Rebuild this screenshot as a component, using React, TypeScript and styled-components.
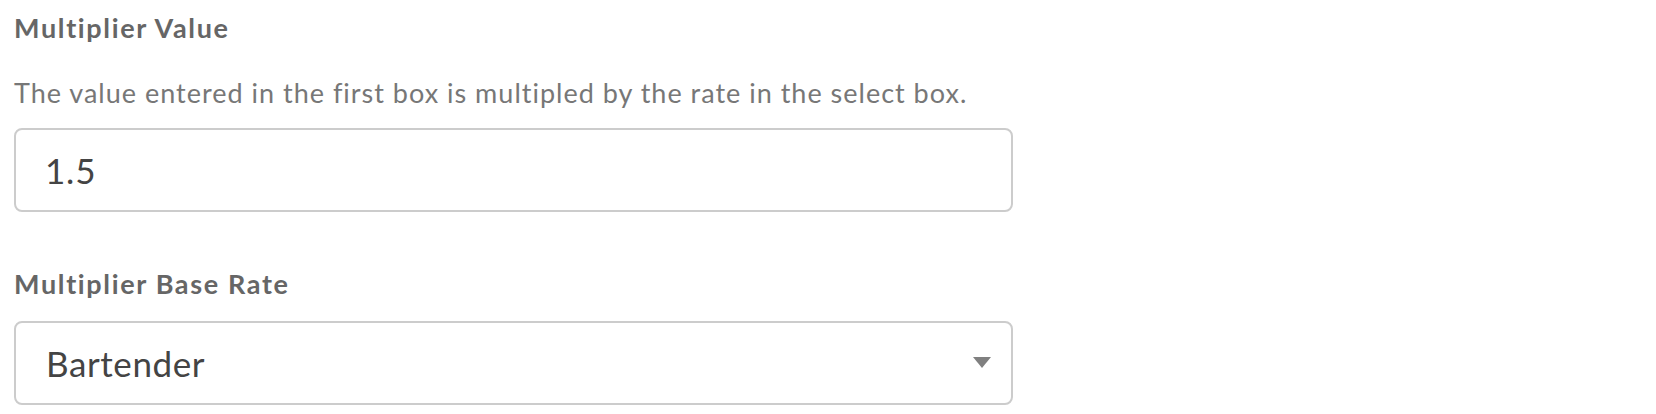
import React from 'react';
import styled, { createGlobalStyle } from 'styled-components';

const GlobalStyle = createGlobalStyle`
  html, body {
    margin: 0;
    padding: 0;
    background: #ffffff;
    font-family: Lato, "Open Sans", "Liberation Sans", sans-serif;
  }
`;

const Form = styled.div`
  width: 999px;
  padding: 12px 0 0 14px;
`;

const Label = styled.div<{ $gap?: number }>`
  margin-top: ${props => props.$gap || 0}px;
  font-size: 27px;
  line-height: 31px;
  font-weight: 700;
  letter-spacing: 1.65px;
  color: #666666;
`;

const Help = styled.div`
  margin-top: 34px;
  font-size: 27px;
  line-height: 32px;
  letter-spacing: 1px;
  color: #777777;
`;

const TextInput = styled.input`
  display: block;
  box-sizing: border-box;
  width: 100%;
  height: 84px;
  margin-top: 19px;
  padding: 0 29px;
  border: 2px solid #cccccc;
  border-radius: 8px;
  background: #ffffff;
  font-family: inherit;
  font-size: 35px;
  letter-spacing: 0.8px;
  color: #444444;
  outline: none;
`;

const SelectBox = styled.div`
  display: flex;
  align-items: center;
  justify-content: space-between;
  box-sizing: border-box;
  width: 100%;
  height: 84px;
  margin-top: 22px;
  padding: 0 20px 0 30px;
  border: 2px solid #cccccc;
  border-radius: 8px;
  background: #ffffff;
  font-size: 35px;
  letter-spacing: 0.6px;
  color: #444444;
`;

const Caret = styled.svg`
  width: 18px;
  height: 12px;
  fill: #808080;
`;

export default function App() {
  return (
    <>
      <GlobalStyle />
      <Form>
        <Label>Multiplier Value</Label>
        <Help>The value entered in the first box is multipled by the rate in the select box.</Help>
        <TextInput defaultValue="1.5" />
        <Label $gap={56}>Multiplier Base Rate</Label>
        <SelectBox>
          <span>Bartender</span>
          <Caret viewBox="0 0 18 12">
            <path d="M0 0 H18 L9 11 Z" />
          </Caret>
        </SelectBox>
      </Form>
    </>
  );
}
